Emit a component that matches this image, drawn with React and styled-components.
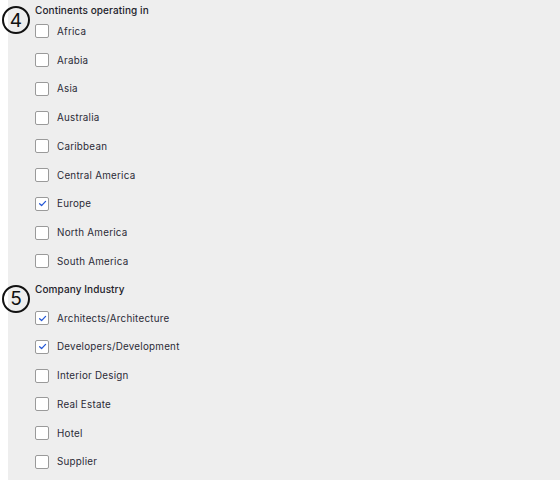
import React, { useState } from "react";
import styled, { createGlobalStyle } from "styled-components";

const GlobalStyle = createGlobalStyle`
  html, body {
    margin: 0;
    padding: 0;
    background: #ffffff;
  }
  body {
    font-family: Inter, "Open Sans", sans-serif;
    -webkit-font-smoothing: antialiased;
  }
`;

const Page = styled.div`
  display: flex;
  height: 480px;
  overflow: hidden;
`;

const Gutter = styled.div`
  width: 8px;
  flex-shrink: 0;
  background: #ffffff;
`;

const Panel = styled.div`
  flex: 1;
  background: #eeeeee;
  padding: 3px 0 0 27px;
`;

const Section = styled.section`
  display: flex;
  flex-direction: column;
  margin-bottom: ${(p) => p.$after || 0}px;
`;

const Heading = styled.h3`
  position: relative;
  margin: 0 0 ${(p) => p.$gap}px;
  height: 14px;
  line-height: 14px;
  font-size: 10px;
  font-weight: 500;
  color: #22222a;
  letter-spacing: 0.1px;
`;

const Badge = styled.span`
  position: absolute;
  box-sizing: border-box;
  left: -33px;
  top: 3px;
  width: 28px;
  height: 28px;
  border: 2px solid #111;
  border-radius: 50%;
  display: flex;
  align-items: center;
  justify-content: center;
  font-size: 19px;
  line-height: 1;
  font-weight: 400;
  color: #111;
`;

const List = styled.ul`
  list-style: none;
  margin: 0;
  padding: 0;
`;

const Row = styled.li`
  height: 28.75px;
  display: flex;
  align-items: center;
  gap: 8px;
  cursor: pointer;
`;

const Box = styled.span`
  width: 12px;
  height: 12px;
  border: 1px solid #9a9a9a;
  border-radius: 2px;
  background: #ffffff;
  display: flex;
  align-items: center;
  justify-content: center;
  flex-shrink: 0;
`;

const Label = styled.span`
  font-size: 9.8px;
  color: #2a2a36;
  letter-spacing: 0.25px;
`;

const CheckMark = () => (
  <svg width="9" height="9" viewBox="0 0 10 10">
    <path d="M1.8 5.2 L4 7.3 L8.4 2.6" fill="none" stroke="#2457d6" strokeWidth="1.4" strokeLinecap="round" strokeLinejoin="round" />
  </svg>
);

const continents = [
  "Africa",
  "Arabia",
  "Asia",
  "Australia",
  "Caribbean",
  "Central America",
  "Europe",
  "North America",
  "South America",
];

const industries = [
  "Architects/Architecture",
  "Developers/Development",
  "Interior Design",
  "Real Estate",
  "Hotel",
  "Supplier",
];

const CheckList = ({ items, checked, onToggle }) => (
  <List>
    {items.map((item) => (
      <Row key={item} onClick={() => onToggle(item)}>
        <Box>{checked.includes(item) && <CheckMark />}</Box>
        <Label>{item}</Label>
      </Row>
    ))}
  </List>
);

const App = () => {
  const [selected, setSelected] = useState([
    "Europe",
    "Architects/Architecture",
    "Developers/Development",
  ]);

  const toggle = (item) =>
    setSelected((s) => (s.includes(item) ? s.filter((i) => i !== item) : [...s, item]));

  return (
    <>
      <GlobalStyle />
      <Page>
        <Gutter />
        <Panel>
          <Section $after={6}>
            <Heading $gap={0}>
              <Badge>4</Badge>
              Continents operating in
            </Heading>
            <CheckList items={continents} checked={selected} onToggle={toggle} />
          </Section>
          <Section>
            <Heading $gap={8}>
              <Badge>5</Badge>
              Company Industry
            </Heading>
            <CheckList items={industries} checked={selected} onToggle={toggle} />
          </Section>
        </Panel>
      </Page>
    </>
  );
};

export default App;
